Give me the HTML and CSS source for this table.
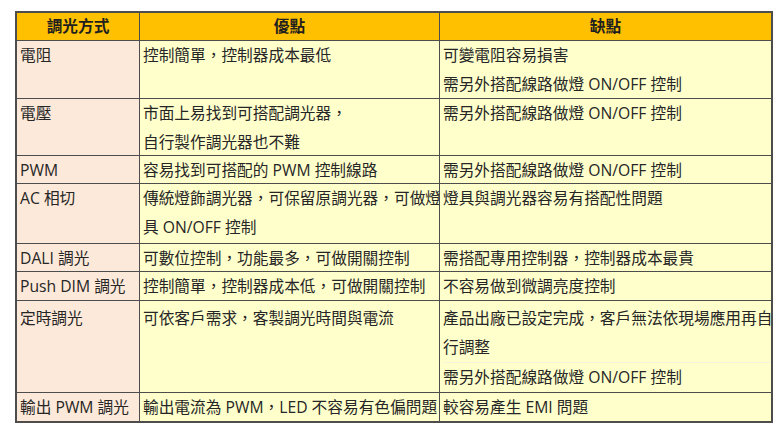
FILE: index.html
```html
<!DOCTYPE html>
<html lang="zh-Hant">
<head>
<meta charset="utf-8">
<title>調光方式比較</title>
<link rel="stylesheet" href="styles.css">
</head>
<body>
<div class="page">
  <div class="grid" role="table">
    <div class="cell head">調光方式</div>
    <div class="cell head">優點</div>
    <div class="cell head">缺點</div>

    <div class="cell name">電阻</div>
    <div class="cell pro">控制簡單，控制器成本最低</div>
    <div class="cell con">可變電阻容易損害<br>需另外搭配線路做燈 ON/OFF 控制</div>

    <div class="cell name">電壓</div>
    <div class="cell pro">市面上易找到可搭配調光器，<br>自行製作調光器也不難</div>
    <div class="cell con">需另外搭配線路做燈 ON/OFF 控制</div>

    <div class="cell name">PWM</div>
    <div class="cell pro">容易找到可搭配的 PWM 控制線路</div>
    <div class="cell con">需另外搭配線路做燈 ON/OFF 控制</div>

    <div class="cell name">AC 相切</div>
    <div class="cell pro">傳統燈飾調光器，可保留原調光器，可做燈<br>具 ON/OFF 控制</div>
    <div class="cell con">燈具與調光器容易有搭配性問題</div>

    <div class="cell name">DALI 調光</div>
    <div class="cell pro">可數位控制，功能最多，可做開關控制</div>
    <div class="cell con">需搭配專用控制器，控制器成本最貴</div>

    <div class="cell name">Push DIM 調光</div>
    <div class="cell pro">控制簡單，控制器成本低，可做開關控制</div>
    <div class="cell con">不容易做到微調亮度控制</div>

    <div class="cell name timed">定時調光</div>
    <div class="cell pro timed">可依客戶需求，客製調光時間與電流</div>
    <div class="cell con timed"><div class="sub">產品出廠已設定完成，客戶無法依現場應用再自<br>行調整</div><div class="sub last">需另外搭配線路做燈 ON/OFF 控制</div></div>

    <div class="cell name">輸出 PWM 調光</div>
    <div class="cell pro">輸出電流為 PWM，LED 不容易有色偏問題</div>
    <div class="cell con">較容易產生 EMI 問題</div>
  </div>
</div>
</body>
</html>
```

FILE: styles.css
```css
html, body {
  margin: 0;
  padding: 0;
  background: #ffffff;
}

.page {
  padding: 11px 0 0 15px;
}

.grid {
  display: grid;
  width: 754px;
  grid-template-columns: 122px 299px 331px;
  grid-template-rows: 27px 57px 56px 27px 59px 27px 28px 91px 28px;
  gap: 1px;
  border: 2px solid #4d4d4d;
  background: #4d4d4d;
  font-family: "Open Sans", "Noto Sans CJK TC", sans-serif;
  font-size: 15.7px;
  color: #262626;
}

.cell {
  padding: 0 0 0 3px;
  line-height: 29px;
  white-space: nowrap;
  overflow: hidden;
}

.head {
  background: #ffc000;
  text-align: center;
  font-weight: bold;
  color: #1f1f1f;
  line-height: 27px;
  padding: 0;
}

.name { background: #fde9d9; }
.pro, .con { background: #ffffcc; }

.timed { padding-top: 3px; }

.sub {
  border-bottom: 1px solid #f3f3de;
}
.sub.last {
  border-bottom: 0;
}
```
